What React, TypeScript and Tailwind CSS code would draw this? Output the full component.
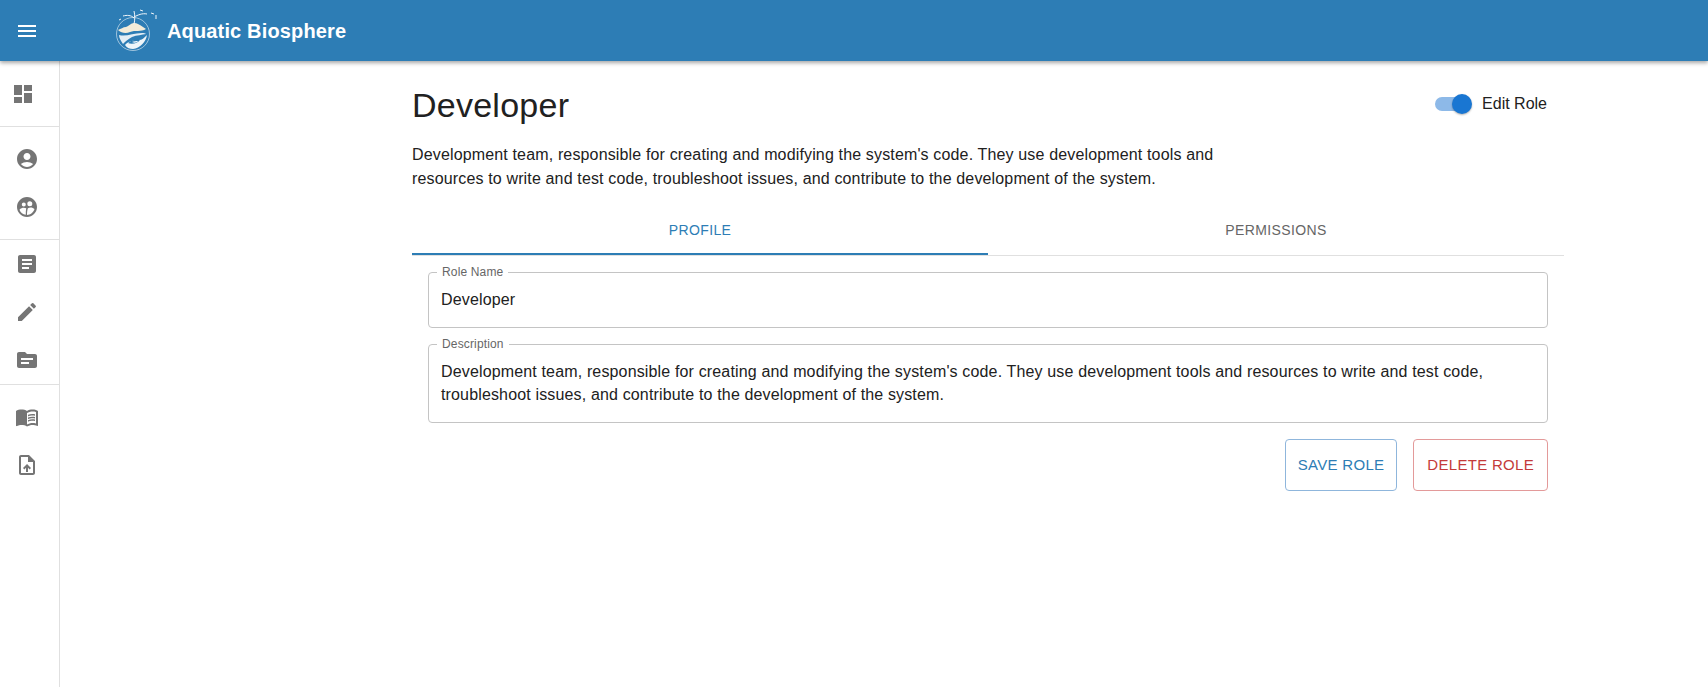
import React from "react";

const paths = {
  menu: "M3 18h18v-2H3v2zm0-5h18v-2H3v2zm0-7v2h18V6H3z",
  dashboard: "M3 13h8V3H3v10zm0 8h8v-6H3v6zm10 0h8V11h-8v10zm0-18v6h8V3h-8z",
  account:
    "M12 2C6.48 2 2 6.48 2 12s4.48 10 10 10 10-4.48 10-10S17.52 2 12 2zm0 4c1.93 0 3.5 1.57 3.5 3.5S13.93 13 12 13s-3.5-1.57-3.5-3.5S10.07 6 12 6zm0 14c-2.03 0-4.43-.82-6.14-2.88C7.55 15.8 9.68 15 12 15s4.45.8 6.14 2.12C16.43 19.18 14.03 20 12 20z",
  article:
    "M19 3H5c-1.1 0-2 .9-2 2v14c0 1.1.9 2 2 2h14c1.1 0 2-.9 2-2V5c0-1.1-.9-2-2-2zm-5 14H7v-2h7v2zm3-4H7v-2h10v2zm0-4H7V7h10v2z",
  edit: "M3 17.25V21h3.75L17.81 9.94l-3.75-3.75L3 17.25zM20.71 7.04c.39-.39.39-1.02 0-1.41l-2.34-2.34a.9959.9959 0 0 0-1.41 0l-1.83 1.83 3.75 3.75 1.83-1.83z",
  topic:
    "M20 6h-8l-2-2H4c-1.1 0-1.99.9-1.99 2L2 18c0 1.1.9 2 2 2h16c1.1 0 2-.9 2-2V8c0-1.1-.9-2-2-2zm-6 10H6v-2h8v2zm4-4H6v-2h12v2z",
  book: "M21 5c-1.11-.35-2.33-.5-3.5-.5-1.95 0-4.05.4-5.5 1.5-1.45-1.1-3.55-1.5-5.5-1.5S2.45 4.9 1 6v14.65c0 .25.25.5.5.5.1 0 .15-.05.25-.05C3.1 20.45 5.05 20 6.5 20c1.95 0 4.05.4 5.5 1.5 1.35-.85 3.8-1.5 5.5-1.5 1.65 0 3.35.3 4.75 1.05.1.05.15.05.25.05.25 0 .5-.25.5-.5V6c-.6-.45-1.25-.75-2-1zm0 13.5c-1.1-.35-2.3-.5-3.5-.5-1.7 0-4.15.65-5.5 1.5V8c1.35-.85 3.8-1.5 5.5-1.5 1.2 0 2.4.15 3.5.5v11.5zM17.5 10.5c.88 0 1.73.09 2.5.26V9.24c-.79-.15-1.64-.24-2.5-.24-1.7 0-3.24.29-4.5.83v1.66c1.13-.64 2.7-.99 4.5-.99zM13 12.49v1.66c1.13-.64 2.7-.99 4.5-.99.88 0 1.73.09 2.5.26V11.9c-.79-.15-1.64-.24-2.5-.24-1.7 0-3.24.3-4.5.83zM17.5 14.33c-1.7 0-3.24.29-4.5.83v1.66c1.13-.64 2.7-.99 4.5-.99.88 0 1.73.09 2.5.26v-1.52c-.79-.16-1.64-.24-2.5-.24z",
  upload:
    "M14 2H6c-1.1 0-1.99.9-1.99 2L4 20c0 1.1.89 2 1.99 2H18c1.1 0 2-.9 2-2V8l-6-6zm4 18H6V4h7v5h5v11zM8 15.01l1.41 1.41L11 14.84V19h2v-4.16l1.59 1.59L16 15.01 12.01 11z",
  team: "M12 2C6.48 2 2 6.48 2 12s4.48 10 10 10 10-4.48 10-10S17.52 2 12 2zM8.8 7.4a2 2 0 1 1 0 4 2 2 0 0 1 0-4zm6-1.2a2.5 2.5 0 1 1 0 5 2.5 2.5 0 0 1 0-5zM10.8 19.8c-2.9-.4-5.3-2.4-6.3-5.1 1.2-1.3 2.8-1.9 4.3-1.9.9 0 1.7.2 2.4.5-.4 2-.5 4.2-.4 6.5zm1.2.2c0-2.4.2-4.8.9-6.8 1.9-1.3 4.9-1.1 6.6.9-1 3.4-4 5.8-7.5 5.9z",
};

const Icon = ({ d, className = "" }: { d: string; className?: string }) => (
  <svg viewBox="0 0 24 24" className={`w-6 h-6 fill-current ${className}`}>
    <path fillRule="evenodd" d={d} />
  </svg>
);

const NavButton = ({ d }: { d: string }) => (
  <div className="h-[48px] flex items-center justify-center pr-[6px] text-[#757575]">
    <Icon d={d} />
  </div>
);

// Whale-and-tree emblem, hand traced
const Logo = () => (
  <svg viewBox="0 0 46 46" className="w-[46px] h-[46px]" fill="none">
    <circle cx="19" cy="26" r="16.5" stroke="#cfe1ee" strokeWidth="0.7" />
    <path d="M4 22c3-1 5-3 8-3 3-1 5-4 8-4s6 2 9 4l3 2c-5 3-11 1-16 3-4 2-9 1-12-2z" fill="#f3ecd9" />
    <path d="M5 24c7 3 14 1 20 1 3 0 6-1 8-2 0 1 0 2-1 3-5-1-11-1-17 1-4 1-7 0-10-3z" fill="#2d7db5" />
    <path d="M5 27c7 2 14-2 23-2 2 0 3 0 4 1-4 1-9 1-14 3-4 2-7 5-9 7-2-3-4-6-4-9z" fill="#e3eef5" />
    <path d="M11 37c2-3 8-5 14-5 3 0 5-2 8-5-1 7-7 13-14 14-3 0-6-1-8-4z" fill="#eef5f9" />
    <path d="M14 35c3-3 8-4 12-3-2 3-8 5-12 3z" fill="#2d7db5" />
    <path d="M18 34c2-1 4-1 6-1-1 2-4 2-6 1z" fill="#eef5f9" />
    <path d="M20 16c1-4 1-9 0-13M20 9c4-2 8-4 13-3M20 10c-3-3-7-3-11-2" stroke="#f1f6fa" strokeWidth="1" />
    <path d="M37 5l3 1M42 7l0 4M26 2l3 1M5 12l2-1" stroke="#f1f6fa" strokeWidth="1" />
  </svg>
);

const Field = ({
  label,
  className = "",
  children,
}: {
  label: string;
  className?: string;
  children: React.ReactNode;
}) => (
  <div className={`relative border border-[#c4c4c4] rounded-[4px] px-[12px] ${className}`}>
    <span className="absolute -top-[8px] left-[8px] px-[5px] bg-white text-[12px] leading-[15px] tracking-[0.15px] text-[#666666]">
      {label}
    </span>
    {children}
  </div>
);

export default function App() {
  return (
    <div className="min-h-[687px] flex flex-col bg-white text-[#212121] font-['Liberation_Sans',Arial,sans-serif] overflow-hidden">
      {/* App bar */}
      <header className="h-[61px] bg-[#2d7db5] flex items-center shadow-[0_2px_4px_rgba(0,0,0,0.35)] relative z-10">
        <div className="w-[54px] flex justify-center text-white">
          <Icon d={paths.menu} />
        </div>
        <div className="ml-[60px] mr-[5px]">
          <Logo />
        </div>
        <span className="text-white font-bold text-[20px] tracking-[0.15px] ml-[2px]">Aquatic Biosphere</span>
      </header>

      <div className="flex flex-1">
        {/* Mini drawer */}
        <nav className="w-[60px] min-h-[626px] border-r border-[#e0e0e0] flex flex-col">
          <div className="h-[66px] border-b border-[#e0e0e0] flex items-center justify-center pr-[14px] text-[#757575]">
            <Icon d={paths.dashboard} />
          </div>
          <div className="h-[113px] border-b border-[#e0e0e0] pt-[8px]">
            <NavButton d={paths.account} />
            <NavButton d={paths.team} />
          </div>
          <div className="h-[145px] border-b border-[#e0e0e0]">
            <NavButton d={paths.article} />
            <NavButton d={paths.edit} />
            <NavButton d={paths.topic} />
          </div>
          <div className="pt-[8px]">
            <NavButton d={paths.book} />
            <NavButton d={paths.upload} />
          </div>
        </nav>

        {/* Role details */}
        <main className="ml-[352px] w-[1152px] pt-[23px]">
          <div className="flex items-start justify-between pr-[17px]">
            <h1 className="text-[34px] leading-[42px] tracking-[0.25px] text-[#212121]">Developer</h1>
            <div className="flex items-center mt-[8px]">
              <div className="relative w-[37px] h-[20px] flex items-center">
                <div className="w-[34px] h-[14px] rounded-full bg-[#8db9e8]" />
                <div className="absolute right-0 top-0 w-[20px] h-[20px] rounded-full bg-[#1976d2] shadow-[0_1px_2px_rgba(0,0,0,0.3)]" />
              </div>
              <span className="ml-[10px] text-[16px]">Edit Role</span>
            </div>
          </div>

          <p className="mt-[17px] w-[803px] text-[16px] leading-[24px] tracking-[0.15px]">
            Development team, responsible for creating and modifying the system's code. They use development tools and
            resources to write and test code, troubleshoot issues, and contribute to the development of the system.
          </p>

          <div className="mt-[16px] flex border-b border-[#e0e0e0] text-[14px] tracking-[0.4px] h-[49px]">
            <div className="w-1/2 flex items-center justify-center text-[#2d7db5] border-b-2 border-[#2d7db5] h-[48px]">
              PROFILE
            </div>
            <div className="w-1/2 flex items-center justify-center pb-[2px] h-[48px] text-[#666666]">PERMISSIONS</div>
          </div>

          <div className="px-[16px] pt-[16px] flex flex-col gap-[16px]">
            <Field label="Role Name" className="h-[56px] flex items-center">
              <span className="text-[16px] tracking-[0.15px]">Developer</span>
            </Field>
            <Field label="Description" className="h-[79px] pt-[15px]">
              <p className="text-[16px] leading-[23px] tracking-[0.15px]">
                Development team, responsible for creating and modifying the system's code. They use development tools
                and resources to write and test code, troubleshoot issues, and contribute to the development of the
                system.
              </p>
            </Field>
            <div className="flex justify-end gap-[16px] text-[15px] tracking-[0.3px]">
              <button className="h-[52px] px-[12px] rounded-[4px] border border-[#8fb6dc] text-[#2d7db5]">
                SAVE ROLE
              </button>
              <button className="h-[52px] px-[13px] rounded-[4px] border border-[#e39a9a] text-[#c43a3a]">
                DELETE ROLE
              </button>
            </div>
          </div>
        </main>
      </div>
    </div>
  );
}
